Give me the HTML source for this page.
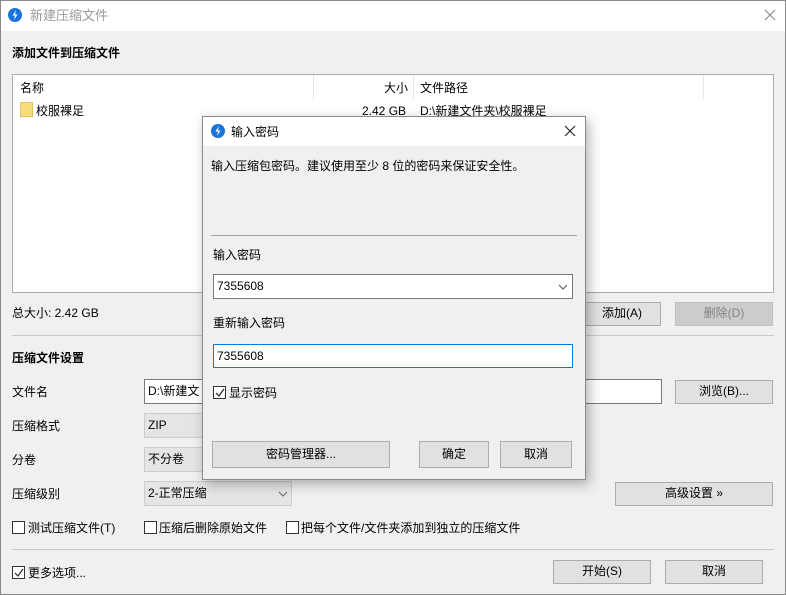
<!DOCTYPE html>
<html><head><meta charset="utf-8"><style>
*{box-sizing:border-box;margin:0;padding:0}
body{width:786px;height:595px;overflow:hidden;background:#f0f0f0;font-family:"Liberation Sans","Noto Sans CJK SC",sans-serif;font-size:12px;color:#000;position:relative}
.a{position:absolute;white-space:nowrap;line-height:16px}
.b{position:absolute;background:#e1e1e1;border:1px solid #adadad;text-align:center;line-height:21px}
.in{position:absolute;background:#fff;border:1px solid #7a7a7a;padding-left:3px;line-height:22px}
.cb{position:absolute;width:13px;height:13px;border:1px solid #333;background:#fff}
.bold{font-weight:bold}
.hl{position:absolute;height:1px;background:#c8c8c8}
</style></head><body>
<div style="position:absolute;left:0;top:0;width:786px;height:595px;border:1px solid #888"></div>
<div style="position:absolute;left:1px;top:1px;width:784px;height:30px;background:#fff"></div>
<svg class="a" style="left:7px;top:7px" width="16" height="16"><circle cx="8" cy="8" r="7" fill="#1a73d9"/><path d="M9 3 L5.5 8.5 H8 L7 13 L10.5 7.5 H8 Z" fill="#fff"/></svg>
<div class="a" style="left:30px;top:8px;color:#999;font-size:13px">新建压缩文件</div>
<svg class="a" style="left:764px;top:9px" width="12" height="12"><path d="M1 1 L11 11 M11 1 L1 11" stroke="#888" stroke-width="1.1"/></svg>
<div class="a bold" style="left:12px;top:45px">添加文件到压缩文件</div>
<div style="position:absolute;left:12px;top:74px;width:762px;height:219px;background:#fff;border:1px solid #adadad"></div>
<div style="position:absolute;left:313px;top:75px;width:1px;height:24px;background:#e5e5e5"></div>
<div style="position:absolute;left:413px;top:75px;width:1px;height:24px;background:#e5e5e5"></div>
<div style="position:absolute;left:703px;top:75px;width:1px;height:24px;background:#e5e5e5"></div>
<div class="a" style="left:20px;top:80px">名称</div>
<div class="a" style="left:384px;top:80px">大小</div>
<div class="a" style="left:420px;top:80px">文件路径</div>
<div style="position:absolute;left:20px;top:102px;width:13px;height:15px;background:#f8dc80;border:1px solid #e6c25c"></div>
<div class="a" style="left:36px;top:103px">校服裸足</div>
<div class="a" style="left:362px;top:103px">2.42 GB</div>
<div class="a" style="left:420px;top:103px">D:\新建文件夹\校服裸足</div>
<div class="a" style="left:12px;top:305px">总大小: 2.42 GB</div>
<div class="b" style="left:583px;top:302px;width:78px;height:24px">添加(A)</div>
<div class="b" style="left:675px;top:302px;width:98px;height:24px;background:#cccccc;border-color:#bfbfbf;color:#838383">删除(D)</div>
<div class="hl" style="left:12px;top:335px;width:762px"></div>
<div class="a bold" style="left:12px;top:350px">压缩文件设置</div>
<div class="a" style="left:12px;top:384px">文件名</div>
<div class="in" style="left:144px;top:379px;width:518px;height:25px">D:\新建文</div>
<div class="b" style="left:675px;top:380px;width:98px;height:24px">浏览(B)...</div>
<div class="a" style="left:12px;top:418px">压缩格式</div>
<div class="in" style="left:144px;top:413px;width:80px;height:25px;background:#e5e5e5;border-color:#ccc">ZIP</div>
<div class="a" style="left:12px;top:452px">分卷</div>
<div class="in" style="left:144px;top:447px;width:80px;height:25px;background:#e5e5e5;border-color:#ccc">不分卷</div>
<div class="a" style="left:12px;top:486px">压缩级别</div>
<div class="in" style="left:144px;top:481px;width:148px;height:25px;background:#e5e5e5;border-color:#ccc">2-正常压缩</div>
<svg class="a" style="left:278px;top:490px" width="10" height="8"><path d="M1 2 L5 6 L9 2" fill="none" stroke="#666"/></svg>
<div class="b" style="left:615px;top:482px;width:158px;height:24px">高级设置 »</div>
<div class="cb" style="left:12px;top:521px"></div><div class="a" style="left:28px;top:520px">测试压缩文件(T)</div>
<div class="cb" style="left:144px;top:521px"></div><div class="a" style="left:159px;top:520px">压缩后删除原始文件</div>
<div class="cb" style="left:286px;top:521px"></div><div class="a" style="left:301px;top:520px">把每个文件/文件夹添加到独立的压缩文件</div>
<div class="hl" style="left:12px;top:549px;width:762px"></div>
<div class="cb" style="left:12px;top:566px"></div><svg class="a" style="left:13px;top:567px" width="12" height="12"><path d="M2 6 L5 9 L10 2" fill="none" stroke="#222" stroke-width="1.2"/></svg>
<div class="a" style="left:28px;top:565px">更多选项...</div>
<div class="b" style="left:553px;top:560px;width:98px;height:24px">开始(S)</div>
<div class="b" style="left:665px;top:560px;width:98px;height:24px">取消</div>

<div style="position:absolute;left:202px;top:116px;width:384px;height:364px;background:#f0f0f0;border:1px solid #8a8a8a;box-shadow:3px 4px 12px rgba(0,0,0,0.3)"></div>
<div style="position:absolute;left:203px;top:117px;width:382px;height:29px;background:#fff"></div>
<svg class="a" style="left:210px;top:123px" width="16" height="16"><circle cx="8" cy="8" r="7" fill="#1a73d9"/><path d="M9 3 L5.5 8.5 H8 L7 13 L10.5 7.5 H8 Z" fill="#fff"/></svg>
<div class="a" style="left:231px;top:124px">输入密码</div>
<svg class="a" style="left:564px;top:125px" width="12" height="12"><path d="M1 1 L11 11 M11 1 L1 11" stroke="#222" stroke-width="1.1"/></svg>
<div class="a" style="left:211px;top:158px">输入压缩包密码。建议使用至少 8 位的密码来保证安全性。</div>
<div class="hl" style="left:211px;top:235px;width:366px;background:#a0a0a0"></div>
<div class="a" style="left:213px;top:247px">输入密码</div>
<div class="in" style="left:213px;top:274px;width:360px;height:25px">7355608</div>
<svg class="a" style="left:558px;top:283px" width="10" height="8"><path d="M1 2 L5 6 L9 2" fill="none" stroke="#555"/></svg>
<div class="a" style="left:213px;top:315px">重新输入密码</div>
<div class="in" style="left:213px;top:344px;width:360px;height:24px;border-color:#0078d7">7355608</div>
<div class="cb" style="left:213px;top:386px"></div><svg class="a" style="left:214px;top:387px" width="12" height="12"><path d="M2 6 L5 9 L10 2" fill="none" stroke="#222" stroke-width="1.2"/></svg>
<div class="a" style="left:229px;top:385px">显示密码</div>
<div class="b" style="left:212px;top:441px;width:178px;height:27px;line-height:24px">密码管理器...</div>
<div class="b" style="left:419px;top:441px;width:70px;height:27px;line-height:24px">确定</div>
<div class="b" style="left:500px;top:441px;width:72px;height:27px;line-height:24px">取消</div>
</body></html>
